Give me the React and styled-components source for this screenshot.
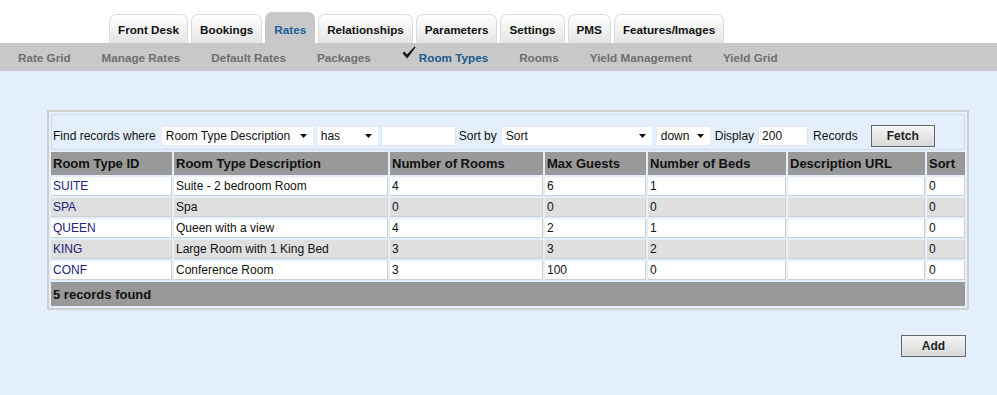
import React from 'react';
import styled, { createGlobalStyle } from 'styled-components';

const GlobalStyle = createGlobalStyle`
  html, body {
    margin: 0;
    padding: 0;
    background: #e4effd;
    font-family: "Liberation Sans", Arial, sans-serif;
    font-size: 12px;
    color: #111;
  }
`;

const tabs = ['Front Desk', 'Bookings', 'Rates', 'Relationships', 'Parameters', 'Settings', 'PMS', 'Features/Images'];
const subItems = ['Rate Grid', 'Manage Rates', 'Default Rates', 'Packages', 'Room Types', 'Rooms', 'Yield Management', 'Yield Grid'];

const columns = [
  { title: 'Room Type ID', width: 121 },
  { title: 'Room Type Description', width: 214 },
  { title: 'Number of Rooms', width: 153 },
  { title: 'Max Guests', width: 101 },
  { title: 'Number of Beds', width: 138 },
  { title: 'Description URL', width: 137 },
  { title: 'Sort', width: 38 },
];

const rows = [
  ['SUITE', 'Suite - 2 bedroom Room', '4', '6', '1', '', '0'],
  ['SPA', 'Spa', '0', '0', '0', '', '0'],
  ['QUEEN', 'Queen with a view', '4', '2', '1', '', '0'],
  ['KING', 'Large Room with 1 King Bed', '3', '3', '2', '', '0'],
  ['CONF', 'Conference Room', '3', '100', '0', '', '0'],
];

const Arrow = () => (
  <svg width="7" height="4" viewBox="0 0 7 4">
    <path d="M0 0 L7 0 L3.5 4 Z" fill="#111" />
  </svg>
);

const Check = () => (
  <svg width="14" height="13" viewBox="0 0 14 13">
    <path d="M0.5 7.2 L2.4 5.6 L5 8.4 L12.6 0.4 L13.6 1.3 L5.2 12.4 Z" fill="#111" />
  </svg>
);

const App = () => {
  return (
    <>
      <GlobalStyle />
      <Header>
        <TabBar>
          {tabs.map((t) => (
            <Tab key={t} $active={t === 'Rates'}>{t}</Tab>
          ))}
        </TabBar>
        <SubNav>
          {subItems.map((s) => (
            <SubItem key={s} $active={s === 'Room Types'}>
              {s === 'Room Types' && <CheckMark><Check /></CheckMark>}
              {s}
            </SubItem>
          ))}
        </SubNav>
      </Header>

      <Content>
        <Panel>
          <Grid>
            <colgroup>
              {columns.map((c) => (
                <col key={c.title} style={{ width: c.width }} />
              ))}
            </colgroup>
            <tbody>
              <tr>
                <FilterCell colSpan={7}>
                  <FilterRow>
                    <Label>Find records where</Label>
                    <Select $w={153} $ml={3}>Room Type Description<Arrow /></Select>
                    <Select $w={63}>has<Arrow /></Select>
                    <TextBox $w={75} />
                    <Label $ml={1}>Sort by</Label>
                    <Select $w={152} $ml={2}>Sort<Arrow /></Select>
                    <Select $w={55} $ml={1}>down<Arrow /></Select>
                    <Label $ml={2}>Display</Label>
                    <TextBox $w={50} $ml={2}>200</TextBox>
                    <Label $ml={3}>Records</Label>
                    <Button $w={64} $ml={11}>Fetch</Button>
                  </FilterRow>
                </FilterCell>
              </tr>
              <tr>
                {columns.map((c) => (
                  <HeadCell key={c.title}>{c.title}</HeadCell>
                ))}
              </tr>
              {rows.map((r, i) => (
                <tr key={r[0]}>
                  {r.map((v, j) => (
                    <DataCell key={j} $alt={i % 2 === 1} $link={j === 0}>{v}</DataCell>
                  ))}
                </tr>
              ))}
              <tr>
                <FootCell colSpan={7}>5 records found</FootCell>
              </tr>
            </tbody>
          </Grid>
        </Panel>
        <Actions>
          <Button $w={65}>Add</Button>
        </Actions>
      </Content>
    </>
  );
};

const Header = styled.div`
  background: #fff;
`;

const TabBar = styled.div`
  display: flex;
  align-items: flex-end;
  gap: 3px;
  height: 43px;
  padding-left: 109px;
  box-sizing: border-box;
`;

const Tab = styled.div`
  height: ${(p) => (p.$active ? '31px' : '29px')};
  box-sizing: border-box;
  padding: 0 8px;
  display: flex;
  align-items: center;
  font-weight: bold;
  font-size: 11.7px;
  border: 1px solid ${(p) => (p.$active ? '#c8c8c8' : '#dcdcdc')};
  border-bottom: none;
  border-radius: 7px 7px 0 0;
  color: ${(p) => (p.$active ? '#1b5f9b' : '#111')};
  background: ${(p) => (p.$active ? '#c8c8c8' : 'linear-gradient(#ffffff, #e4e4e4)')};
  padding-top: ${(p) => (p.$active ? '2px' : '0')};
`;

const SubNav = styled.div`
  display: flex;
  align-items: center;
  gap: 31px;
  height: 28px;
  padding-left: 18px;
  background: #c8c8c8;
`;

const SubItem = styled.div`
  display: flex;
  align-items: center;
  font-weight: bold;
  font-size: 11.7px;
  color: ${(p) => (p.$active ? '#1b5a8e' : '#6f6f6f')};
`;

const CheckMark = styled.span`
  display: inline-flex;
  width: 17px;
  margin-top: -10px;
`;

const Content = styled.div`
  padding: 39px 28px 30px 47px;
`;

const Panel = styled.div`
  border: 2px solid #cfcfcf;
`;

const Grid = styled.table`
  width: 100%;
  table-layout: fixed;
  border-collapse: separate;
  border-spacing: 2px;
  font-size: 12px;
`;

const FilterCell = styled.td`
  height: 36px;
  box-sizing: border-box;
  border: 1px solid #d3dbe4;
  padding: 10px 1px 2px;
  vertical-align: top;
`;

const FilterRow = styled.div`
  display: flex;
  align-items: center;
  gap: 2px;
`;

const Label = styled.span`
  margin-left: ${(p) => p.$ml || 0}px;
  white-space: nowrap;
`;

const Select = styled.span`
  display: inline-flex;
  align-items: center;
  justify-content: space-between;
  width: ${(p) => p.$w}px;
  margin-left: ${(p) => p.$ml || 0}px;
  height: 20px;
  box-sizing: border-box;
  padding: 0 6px 0 4px;
  background: #fff;
  border: 1px solid #e6edf5;
  white-space: nowrap;
`;

const TextBox = styled.span`
  display: inline-flex;
  align-items: center;
  width: ${(p) => p.$w}px;
  margin-left: ${(p) => p.$ml || 0}px;
  height: 20px;
  box-sizing: border-box;
  padding: 0 3px;
  background: #fff;
  border: 1px solid #dde4ec;
`;

const Button = styled.span`
  display: inline-flex;
  align-items: center;
  justify-content: center;
  width: ${(p) => p.$w}px;
  margin-left: ${(p) => p.$ml || 0}px;
  height: 22px;
  box-sizing: border-box;
  border: 1px solid #666;
  background: linear-gradient(#f5f5f5, #d8d8d8);
  font-weight: bold;
  font-size: 12px;
  color: #222;
`;

const HeadCell = styled.td`
  height: 23px;
  box-sizing: border-box;
  padding: 0 2px;
  background: #999;
  font-weight: bold;
  font-size: 13px;
  color: #111;
  white-space: nowrap;
  overflow: hidden;
`;

const DataCell = styled.td`
  height: 19px;
  box-sizing: border-box;
  padding: 0 2px;
  background: ${(p) => (p.$alt ? '#dfdfdf' : '#fff')};
  border-right: 1px solid #d0d0d0;
  border-bottom: 1px solid #d0d0d0;
  color: ${(p) => (p.$link ? '#22227a' : '#111')};
  white-space: nowrap;
`;

const FootCell = styled.td`
  height: 24px;
  box-sizing: border-box;
  padding: 0 2px;
  background: #999;
  font-weight: bold;
  font-size: 13px;
  color: #111;
`;

const Actions = styled.div`
  display: flex;
  justify-content: flex-end;
  padding-top: 25px;
  padding-right: 3px;
`;

export default App;
